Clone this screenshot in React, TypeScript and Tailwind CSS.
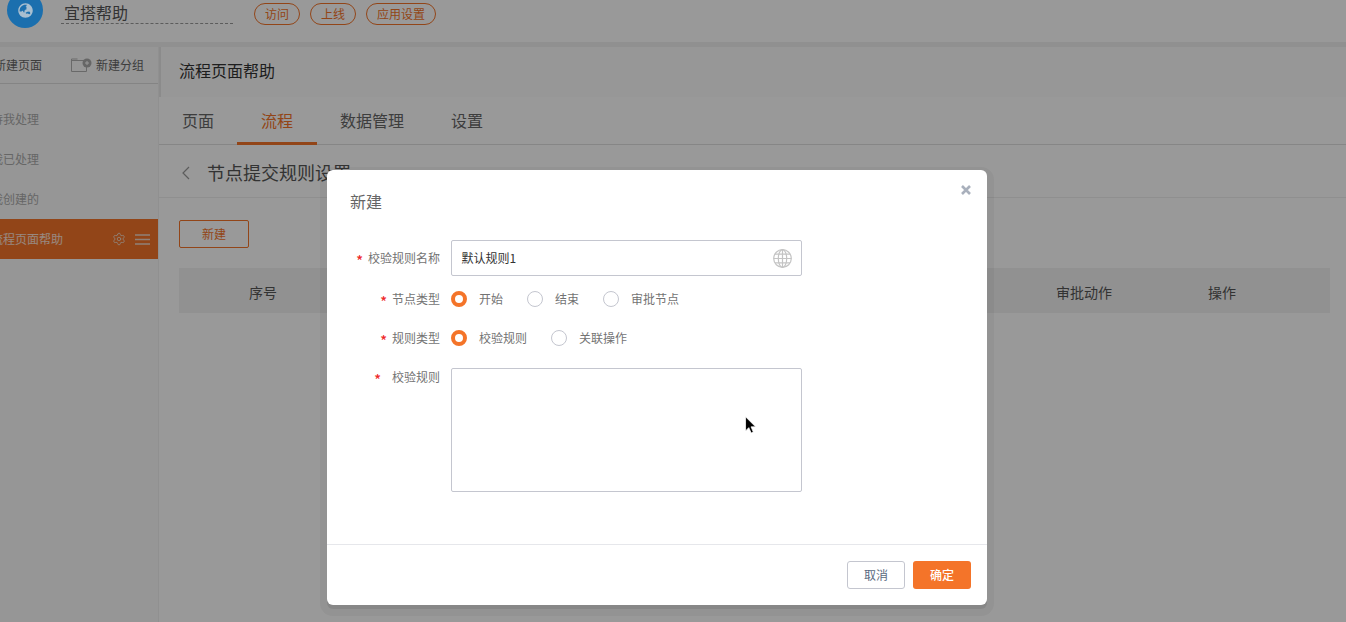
import React from 'react';
import { Settings } from 'lucide-react';
import { FaGlobeAsia } from 'react-icons/fa';

const sideItems = ['待我处理', '我已处理', '我创建的'];
const tabs = ['页面', '流程', '数据管理', '设置'];

const Radio: React.FC<{ label: string; checked?: boolean; className: string }> = ({ label, checked, className }) => (
  <label className={`flex items-center ${className}`}>
    {checked ? (
      <span className="h-4 w-4 shrink-0 rounded-full border-[4px] border-[#f47429] bg-white" />
    ) : (
      <span className="h-4 w-4 shrink-0 rounded-full border border-[#c4c6cf] bg-white" />
    )}
    <span className="ml-[12px] text-xs text-[#737373]">{label}</span>
  </label>
);

const FieldLabel: React.FC<{ text: string; starClass: string }> = ({ text, starClass }) => (
  <div className="flex h-4 w-[113px] shrink-0 justify-end text-xs leading-4 text-[#737373]">
    <span className={`h-4 translate-y-[2px] text-sm font-medium leading-4 text-[#ee2a2a] ${starClass}`}>*</span>
    <span>{text}</span>
  </div>
);

const GlobeGrid: React.FC = () => (
  <svg width="19" height="19" viewBox="0 0 19 19" fill="none" stroke="#c4c4c4" strokeWidth="1.2">
    <circle cx="9.5" cy="9.5" r="8.8" />
    <ellipse cx="9.5" cy="9.5" rx="4.2" ry="8.8" />
    <path d="M9.5.7v17.6M.7 9.5h17.6M2 5.2h15M2 13.8h15" />
  </svg>
);

const App: React.FC = () => {
  return (
    <div className="relative h-[622px] w-[1346px] overflow-hidden bg-[#f0f0f0] font-['Noto_Sans_CJK_SC',sans-serif]">
      {/* top bar */}
      <header className="flex h-[42px] items-start bg-white">
        <div className="relative z-10 ml-[7px] mt-[-8px] flex h-9 w-9 items-center justify-center rounded-full bg-[#1b6fae]">
          <FaGlobeAsia size={15} className="text-[#a9bfd0]" />
        </div>
        <div className="ml-[18px] h-[24px] w-[172px] border-b border-dashed border-[#999] pl-[3px] text-base leading-[25px] text-[#555]">
          宜搭帮助
        </div>
        <div className="ml-[21px] mt-[3px] flex gap-[10px]">
          <button className="h-[22px] w-[46px] rounded-full border border-[#f47429] text-xs text-[#f47429]">访问</button>
          <button className="h-[22px] w-[46px] rounded-full border border-[#f47429] text-xs text-[#f47429]">上线</button>
          <button className="h-[22px] w-[70px] rounded-full border border-[#f47429] text-xs text-[#f47429]">应用设置</button>
        </div>
      </header>

      <div className="mt-[5px] flex h-[575px]">
        {/* sidebar */}
        <aside className="w-[158px] shrink-0 bg-[#fafafa]">
          <div className="flex h-[37px] items-center justify-between border-b border-[#ddd] pr-[14px] text-xs text-[#666]">
            <span className="ml-[-6px]">新建页面</span>
            <span className="flex items-center gap-[5px]">
              <svg width="21" height="14" viewBox="0 0 21 14" fill="none" className="-translate-x-[-1px]">
                <path d="M.5 2.5h13M.5 1v12.5h15V8M.5 1h6" stroke="#b0b0b0" />
                <circle cx="16" cy="5" r="4.5" fill="#aaa" />
                <path d="M16 3v4M14 5h4" stroke="#fff" />
              </svg>
              新建分组
            </span>
          </div>
          <div className="mt-[15px]">
            {sideItems.map((item) => (
              <div key={item} className="ml-[-9px] flex h-10 items-center text-xs text-[#aaa]">
                {item}
              </div>
            ))}
            <div className="flex h-10 items-center justify-between bg-[#f47429] pr-2 text-xs text-white/80">
              <span className="ml-[-9px]">流程页面帮助</span>
              <span className="flex items-center gap-[9px] text-[#f0d8c8]">
                <Settings size={14} strokeWidth={1.5} />
                <svg width="15" height="11" viewBox="0 0 15 11" stroke="currentColor" strokeWidth="1.3">
                  <path d="M0 1h15M0 5.5h15M0 10h15" />
                </svg>
              </span>
            </div>
          </div>
        </aside>

        {/* main */}
        <main className="flex-1 border-l border-[#f0f0f0] bg-white">
          <div className="h-[50px] border-l-2 border-[#e8e8e8] bg-[#fcfcfc] pl-[18px] pt-[12px] text-base leading-[22px] text-[#333]">
            流程页面帮助
          </div>
          <nav className="flex h-[48px] border-b border-[#e0e0e0] text-base">
            <div className="ml-[-1px] flex">
              {tabs.map((tab, i) => (
                <div
                  key={tab}
                  className={
                    i === 1
                      ? 'flex h-[48px] items-center border-b-[3px] border-[#f47429] px-[24px] text-[#f47429]'
                      : i === 0
                        ? 'flex h-[48px] items-center pb-[2px] pl-[24px] pr-[23px] text-[#666]'
                        : 'flex h-[48px] items-center pb-[2px] pl-[23px] pr-[24px] text-[#666]'
                  }
                >
                  {tab}
                </div>
              ))}
            </div>
          </nav>
          <div className="flex h-[53px] items-center border-b border-[#eee] pl-[22px]">
            <svg width="10" height="14" viewBox="0 0 10 14" fill="none" className="mt-[4px]">
              <path d="M8 1 2 7l6 6" stroke="#999" strokeWidth="1.2" />
            </svg>
            <span className="ml-[16px] mt-[1px] text-lg text-[#555]">节点提交规则设置</span>
          </div>
          <div className="pl-[20px] pr-4 pt-[22px]">
            <button className="h-7 w-[70px] rounded-[2px] border border-[#f47429] text-xs text-[#f47429]">新建</button>
            <div className="relative mt-5 h-[45px] bg-[#f2f2f2] text-sm leading-[48px] text-[#555]">
              <span className="absolute left-[70px]">序号</span>
              <span className="absolute left-[877px]">审批动作</span>
              <span className="absolute left-[1029px]">操作</span>
            </div>
          </div>
        </main>
      </div>

      {/* dialog mask */}
      <div className="absolute inset-0 flex items-start justify-center bg-black/40 pr-[32px] pt-[170px]">
        <div className="relative flex h-[435px] w-[660px] flex-col rounded-[6px] bg-white shadow-[0_4px_0_0_rgba(0,0,0,0.08),0_4px_0_7px_rgba(0,0,0,0.04)]">
          <svg width="10" height="10" viewBox="0 0 10 10" className="absolute right-[16px] top-[15px]" stroke="#a9b0bc" strokeWidth="2.6">
            <path d="M1 1l8 8M9 1l-8 8" />
          </svg>
          <div className="pl-[23px] pt-[19px] text-base leading-6 text-[#666]">新建</div>

          <div className="mt-[27px] flex flex-1 flex-col">
            <div className="flex items-center">
              <FieldLabel text="校验规则名称" starClass="mr-[5px]" />
              <div className="ml-[11px] flex h-9 w-[351px] items-center justify-between rounded-[2px] border border-[#c4c6cf] pl-[9.5px] pr-[9px] text-xs text-[#333]">
                默认规则1
                <GlobeGrid />
              </div>
            </div>
            <div className="mt-[15px] flex items-center">
              <FieldLabel text="节点类型" starClass="mr-[5px]" />
              <div className="ml-[11px] flex">
                <Radio label="开始" checked className="w-[76px]" />
                <Radio label="结束" className="w-[76px]" />
                <Radio label="审批节点" className="w-[100px]" />
              </div>
            </div>
            <div className="mt-[23px] flex items-center">
              <FieldLabel text="规则类型" starClass="mr-[5px]" />
              <div className="ml-[11px] flex">
                <Radio label="校验规则" checked className="w-[100px]" />
                <Radio label="关联操作" className="w-[100px]" />
              </div>
            </div>
            <div className="mt-[22px] flex items-start">
              <div className="pt-[1px]">
                <FieldLabel text="校验规则" starClass="mr-[11px]" />
              </div>
              <div className="ml-[11px] h-[124px] w-[351px] rounded-[2px] border border-[#c4c6cf]" />
            </div>
          </div>

          <div className="flex h-[61px] items-start justify-end gap-2 border-t border-[#e6e7eb] pr-4 pt-4">
            <button className="h-7 w-[58px] rounded-[3px] border border-[#c4c6cf] text-xs text-[#5a6a80]">取消</button>
            <button className="h-7 w-[58px] rounded-[3px] bg-[#f47429] text-xs font-medium text-white">确定</button>
          </div>
        </div>
      </div>

      {/* mouse pointer */}
      <svg width="13" height="20" viewBox="0 0 12 18" className="absolute left-[745px] top-[416px]">
        <path d="M.5.5v13l3-3 2.2 5 2-.9-2.1-4.8h4.2z" fill="#000" stroke="#fff" strokeWidth=".7" />
      </svg>
    </div>
  );
};

export default App;
